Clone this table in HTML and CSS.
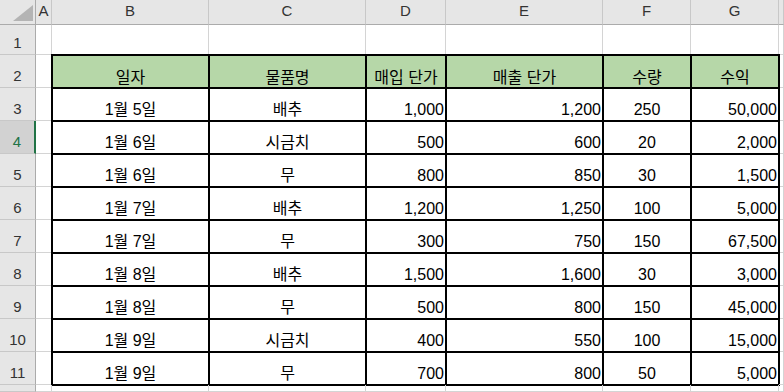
FILE: index.html
```html
<!DOCTYPE html>
<html lang="ko">
<head>
<meta charset="utf-8">
<title>Sheet</title>
<link rel="stylesheet" href="styles.css">
</head>
<body>
<div class="sheet">
  <div class="corner"><span class="tri"></span></div>
  <div class="ch">A</div><div class="ch">B</div><div class="ch">C</div><div class="ch">D</div><div class="ch">E</div><div class="ch">F</div><div class="ch">G</div><div class="ch"></div>

  <div class="rh">1</div>
  <div class="c"></div><div class="c"></div><div class="c"></div><div class="c"></div><div class="c"></div><div class="c"></div><div class="c"></div><div class="c"></div>

  <div class="rh">2</div>
  <div class="c"></div>
  <div class="c t hd">일자</div><div class="c t hd">물품명</div><div class="c t hd">매입 단가</div><div class="c t hd">매출 단가</div><div class="c t hd">수량</div><div class="c t hd">수익</div>
  <div class="c"></div>

  <div class="rh">3</div>
  <div class="c"></div>
  <div class="c t ctr">1월 5일</div><div class="c t ctr">배추</div><div class="c t num">1,000</div><div class="c t num">1,200</div><div class="c t ctr">250</div><div class="c t num">50,000</div>
  <div class="c"></div>

  <div class="rh active">4</div>
  <div class="c"></div>
  <div class="c t ctr">1월 6일</div><div class="c t ctr">시금치</div><div class="c t num">500</div><div class="c t num">600</div><div class="c t ctr">20</div><div class="c t num">2,000</div>
  <div class="c"></div>

  <div class="rh">5</div>
  <div class="c"></div>
  <div class="c t ctr">1월 6일</div><div class="c t ctr">무</div><div class="c t num">800</div><div class="c t num">850</div><div class="c t ctr">30</div><div class="c t num">1,500</div>
  <div class="c"></div>

  <div class="rh">6</div>
  <div class="c"></div>
  <div class="c t ctr">1월 7일</div><div class="c t ctr">배추</div><div class="c t num">1,200</div><div class="c t num">1,250</div><div class="c t ctr">100</div><div class="c t num">5,000</div>
  <div class="c"></div>

  <div class="rh">7</div>
  <div class="c"></div>
  <div class="c t ctr">1월 7일</div><div class="c t ctr">무</div><div class="c t num">300</div><div class="c t num">750</div><div class="c t ctr">150</div><div class="c t num">67,500</div>
  <div class="c"></div>

  <div class="rh">8</div>
  <div class="c"></div>
  <div class="c t ctr">1월 8일</div><div class="c t ctr">배추</div><div class="c t num">1,500</div><div class="c t num">1,600</div><div class="c t ctr">30</div><div class="c t num">3,000</div>
  <div class="c"></div>

  <div class="rh">9</div>
  <div class="c"></div>
  <div class="c t ctr">1월 8일</div><div class="c t ctr">무</div><div class="c t num">500</div><div class="c t num">800</div><div class="c t ctr">150</div><div class="c t num">45,000</div>
  <div class="c"></div>

  <div class="rh">10</div>
  <div class="c"></div>
  <div class="c t ctr">1월 9일</div><div class="c t ctr">시금치</div><div class="c t num">400</div><div class="c t num">550</div><div class="c t ctr">100</div><div class="c t num">15,000</div>
  <div class="c"></div>

  <div class="rh">11</div>
  <div class="c"></div>
  <div class="c t ctr">1월 9일</div><div class="c t ctr">무</div><div class="c t num">700</div><div class="c t num">800</div><div class="c t ctr">50</div><div class="c t num">5,000</div>
  <div class="c"></div>

  <div class="rh"></div>
  <div class="c"></div><div class="c"></div><div class="c"></div><div class="c"></div><div class="c"></div><div class="c"></div><div class="c"></div><div class="c"></div>
</div>
</body>
</html>
```
FILE: styles.css
```css
html, body {
  margin: 0;
  padding: 0;
  background: #ffffff;
}

body {
  width: 784px;
  height: 392px;
  overflow: hidden;
  font-family: "Liberation Sans", "Noto Sans CJK KR", sans-serif;
  color: #000;
}

.sheet {
  display: grid;
  grid-template-columns: 36px 16px 157px 157px 80px 157px 88px 88px 1fr;
  grid-template-rows: 25px 30px repeat(10, 33px) 1fr;
  width: 784px;
  height: 392px;
  background: #ffffff;
}

.sheet > div {
  box-sizing: border-box;
  min-width: 0;
}

.corner {
  background: #e6e6e6;
  border-right: 1px solid #ababab;
  border-bottom: 1px solid #ababab;
  display: flex;
  align-items: flex-end;
  justify-content: flex-end;
  padding: 0 2px 3px 0;
}

.tri {
  display: block;
  width: 20px;
  height: 16px;
  background: #b4b4b4;
  clip-path: polygon(100% 0, 100% 100%, 0 100%);
}

.ch {
  background: #e6e6e6;
  border-right: 1px solid #c8c8c8;
  border-bottom: 1px solid #ababab;
  display: flex;
  align-items: center;
  justify-content: center;
  font-size: 15px;
  line-height: 16px;
  color: #333;
  padding-bottom: 2px;
}

.rh {
  background: #e6e6e6;
  border-right: 1px solid #ababab;
  border-bottom: 1px solid #c8c8c8;
  display: flex;
  align-items: flex-end;
  justify-content: center;
  font-size: 15px;
  line-height: 16px;
  color: #333;
  padding-bottom: 3px;
}

.rh.active {
  background: #d2d2d2;
  color: #217346;
  border-right: 2px solid #217346;
}

.c {
  border-right: 1px solid #d4d4d4;
  border-bottom: 1px solid #d4d4d4;
  display: flex;
  align-items: flex-end;
  justify-content: flex-start;
  font-size: 16px;
  line-height: 16px;
  padding: 0 2px 2px;
  white-space: nowrap;
}

.t {
  border: 1px solid #000;
  box-shadow: 0 0 0 1px #000;
}

.hd {
  background: #b6d7a8;
  justify-content: center;
  padding-bottom: 1px;
}

.ctr {
  justify-content: center;
}

.num {
  justify-content: flex-end;
  padding-right: 1px;
}
```
